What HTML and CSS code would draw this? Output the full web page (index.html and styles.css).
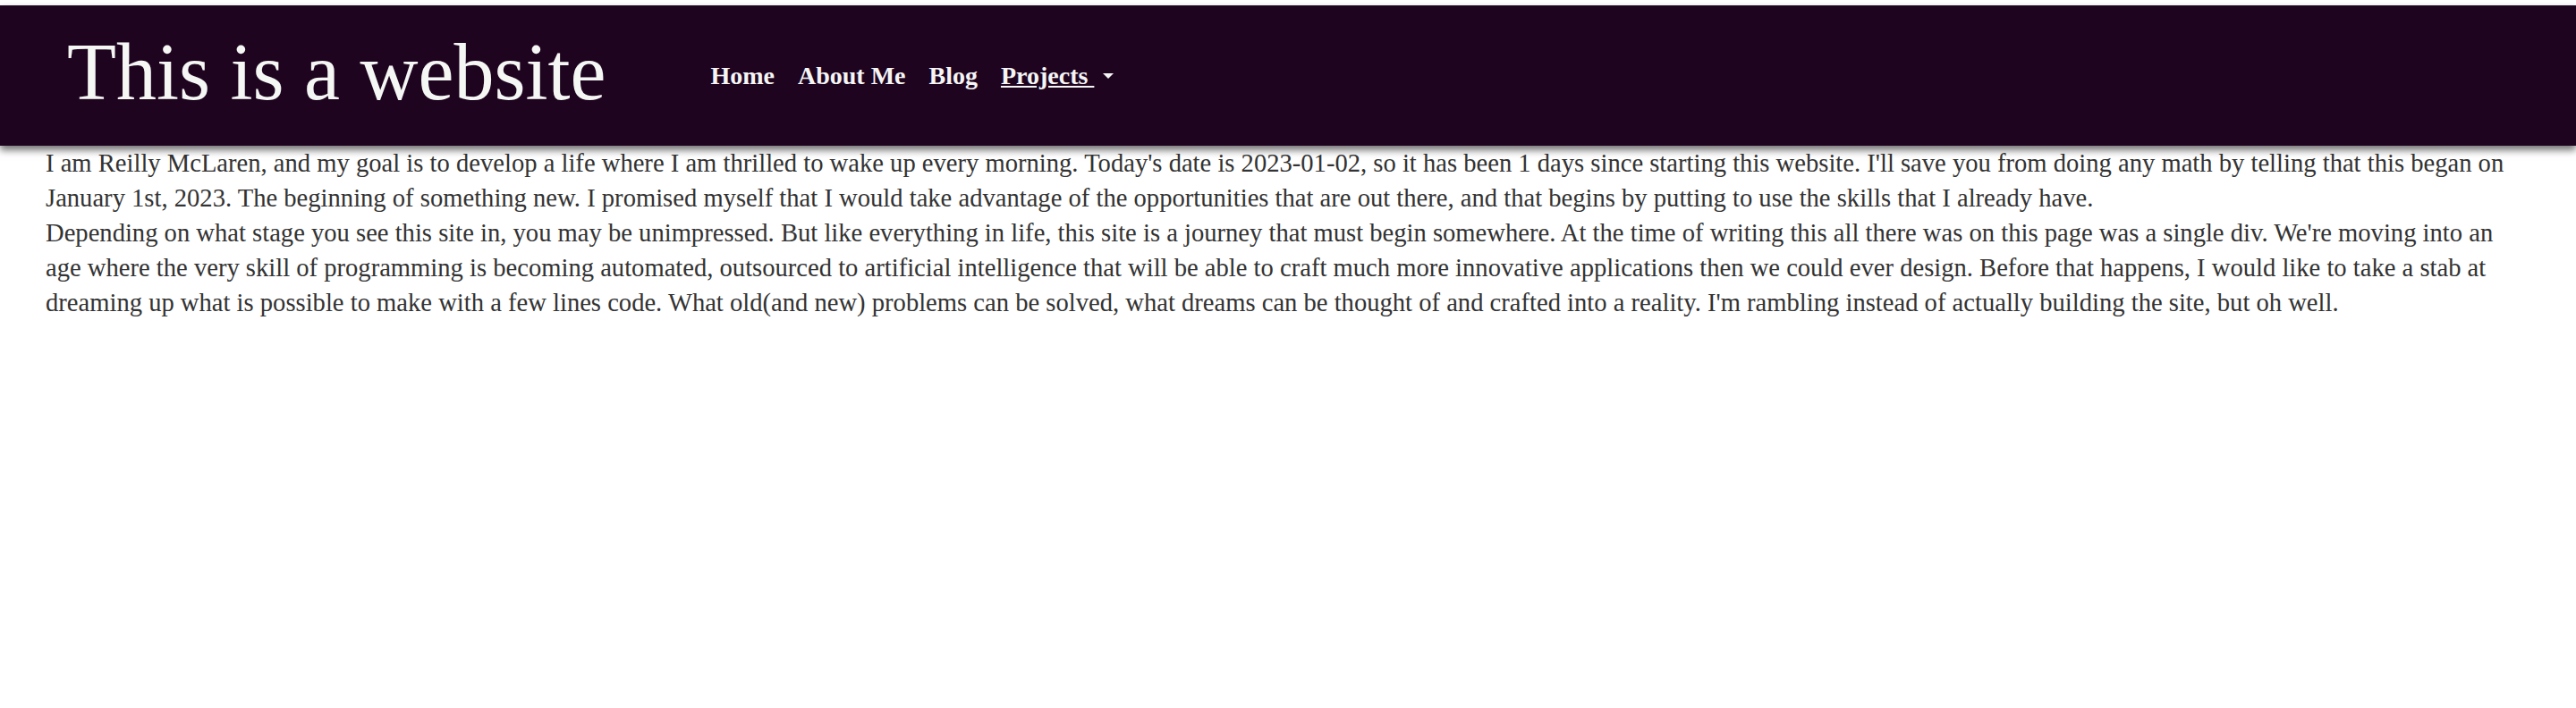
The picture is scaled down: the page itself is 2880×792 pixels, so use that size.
FILE: index.html
```html
<!DOCTYPE html>
<html lang="en">
<head>
<meta charset="utf-8">
<title>This is a website</title>
<link rel="stylesheet" href="styles.css">
</head>
<body>
<header class="site-header">
  <h1 class="site-title">This is a website</h1>
  <nav class="site-nav">
    <a class="nav-link" href="#">Home</a>
    <a class="nav-link" href="#">About Me</a>
    <a class="nav-link" href="#">Blog</a>
    <a class="nav-link nav-dropdown" href="#"><span class="nav-underline">Projects </span><span class="caret"></span></a>
  </nav>
</header>
<main class="content">
  <p class="para">I am Reilly McLaren, and my goal is to develop a life where I am thrilled to wake up every morning. Today's date is 2023-01-02, so it has been 1 days since starting this website. I'll save you from doing any math by telling that this began on January 1st, 2023. The beginning of something new. I promised myself that I would take advantage of the opportunities that are out there, and that begins by putting to use the skills that I already have.</p>
  <p class="para">Depending on what stage you see this site in, you may be unimpressed. But like everything in life, this site is a journey that must begin somewhere. At the time of writing this all there was on this page was a single div. We're moving into an age where the very skill of programming is becoming automated, outsourced to artificial intelligence that will be able to craft much more innovative applications then we could ever design. Before that happens, I would like to take a stab at dreaming up what is possible to make with a few lines code. What old(and new) problems can be solved, what dreams can be thought of and crafted into a reality. I'm rambling instead of actually building the site, but oh well.</p>
</main>
</body>
</html>
```
FILE: styles.css
```css
html, body {
  margin: 0;
  padding: 0;
  background: #ffffff;
}
body {
  font-family: "Liberation Serif", "Times New Roman", serif;
  color: #333333;
}
.site-header {
  margin-top: 6px;
  height: 157px;
  background: #1f0420;
  display: flex;
  align-items: center;
  box-shadow: 0 5px 8px rgba(0, 0, 0, 0.55);
  position: relative;
  z-index: 1;
}
.site-title {
  margin: 0 0 0 75px;
  font-size: 90px;
  font-weight: 400;
  color: #f5f7f4;
  line-height: 1;
  padding-bottom: 8px;
}
.site-nav {
  display: flex;
  margin-left: 104px;
  padding-bottom: 0;
}
.nav-link {
  color: #f5f5f5;
  font-weight: 700;
  font-size: 28px;
  text-decoration: none;
  padding: 0 13px;
  display: flex;
  align-items: center;
}
.nav-underline {
  text-decoration: underline;
  white-space: pre;
}
.caret {
  display: inline-block;
  margin-left: 10px;
  width: 0;
  height: 0;
  border-top: 6px solid #f5f5f5;
  border-left: 6px solid transparent;
  border-right: 6px solid transparent;
}
.content {
  padding: 0 51px;
}
.para {
  margin: 0;
  font-size: 28.6px;
  line-height: 39px;
}
```
